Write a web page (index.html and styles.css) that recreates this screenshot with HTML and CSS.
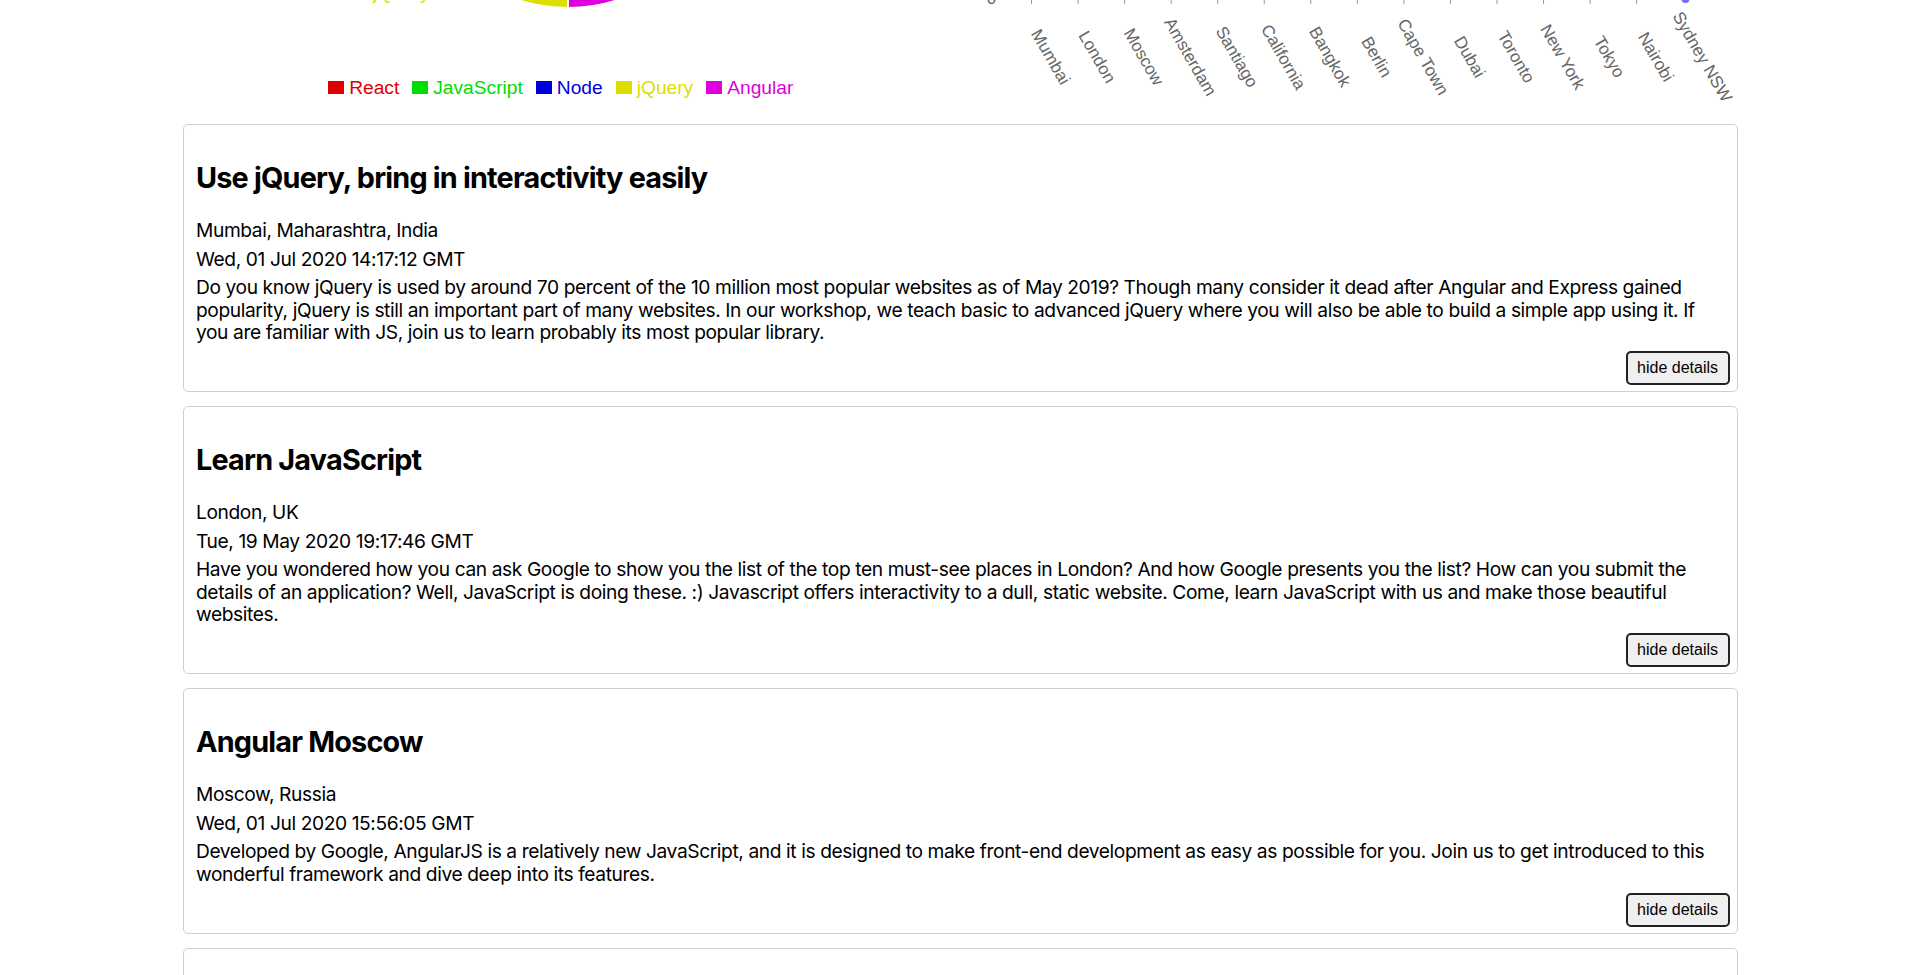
FILE: index.html
```html
<!DOCTYPE html>
<html lang="en">
<head>
<meta charset="utf-8">
<title>Workshops</title>
<link rel="stylesheet" href="styles.css">
</head>
<body>
<div class="page">
  <section class="charts">
    <div class="chart chart-pie">
      <svg class="pie-svg" width="777" height="76" viewBox="0 0 777 76">
        <g stroke="#fff" stroke-width="2">
          <path d="M385 -152 L385 -312 A160 160 0 0 1 535.4 -206.7 Z" fill="#dd0000"/>
          <path d="M385 -152 L535.4 -206.7 A160 160 0 0 1 507.6 -49.2 Z" fill="#00dd00"/>
          <path d="M385 -152 L507.6 -49.2 A160 160 0 0 1 385 8 Z" fill="#dd00dd"/>
          <path d="M385 -152 L385 8 A160 160 0 0 1 227.4 -179.8 Z" fill="#dddd00"/>
          <path d="M385 -152 L227.4 -179.8 A160 160 0 0 1 385 -312 Z" fill="#0000dd"/>
        </g>
        <text x="190" y="-1" class="pie-label" fill="#dddd00">jQuery</text>
      </svg>
      <ul class="legend">
        <li class="legend-item react"><span class="swatch"></span>React</li>
        <li class="legend-item javascript"><span class="swatch"></span>JavaScript</li>
        <li class="legend-item node"><span class="swatch"></span>Node</li>
        <li class="legend-item jquery"><span class="swatch"></span>jQuery</li>
        <li class="legend-item angular"><span class="swatch"></span>Angular</li>
      </ul>
    </div>
    <div class="chart chart-bar">
      <svg class="bar-svg" width="777" height="110" viewBox="0 0 777 110">
        <text x="30.5" y="3.5" class="axis-label" text-anchor="middle">0</text>
        <g stroke="#999" stroke-width="1">
          <line x1="70.5" y1="-6" x2="70.5" y2="4"/>
          <line x1="117.05" y1="-6" x2="117.05" y2="4"/>
          <line x1="163.6" y1="-6" x2="163.6" y2="4"/>
          <line x1="210.15" y1="-6" x2="210.15" y2="4"/>
          <line x1="256.7" y1="-6" x2="256.7" y2="4"/>
          <line x1="303.25" y1="-6" x2="303.25" y2="4"/>
          <line x1="349.8" y1="-6" x2="349.8" y2="4"/>
          <line x1="396.35" y1="-6" x2="396.35" y2="4"/>
          <line x1="442.9" y1="-6" x2="442.9" y2="4"/>
          <line x1="489.45" y1="-6" x2="489.45" y2="4"/>
          <line x1="536" y1="-6" x2="536" y2="4"/>
          <line x1="582.55" y1="-6" x2="582.55" y2="4"/>
          <line x1="629.1" y1="-6" x2="629.1" y2="4"/>
          <line x1="675.65" y1="-6" x2="675.65" y2="4"/>
        </g>
        <circle cx="724.5" cy="-1" r="4" fill="#7070f0"/>
        <g class="axis-label">
          <text transform="translate(89.5 57) rotate(60)" text-anchor="middle" dominant-baseline="central">Mumbai</text>
          <text transform="translate(136.05 57) rotate(60)" text-anchor="middle" dominant-baseline="central">London</text>
          <text transform="translate(182.6 57) rotate(60)" text-anchor="middle" dominant-baseline="central">Moscow</text>
          <text transform="translate(229.15 57) rotate(60)" text-anchor="middle" dominant-baseline="central">Amsterdam</text>
          <text transform="translate(275.7 57) rotate(60)" text-anchor="middle" dominant-baseline="central">Santiago</text>
          <text transform="translate(322.25 57) rotate(60)" text-anchor="middle" dominant-baseline="central">California</text>
          <text transform="translate(368.8 57) rotate(60)" text-anchor="middle" dominant-baseline="central">Bangkok</text>
          <text transform="translate(415.35 57) rotate(60)" text-anchor="middle" dominant-baseline="central">Berlin</text>
          <text transform="translate(461.9 57) rotate(60)" text-anchor="middle" dominant-baseline="central">Cape Town</text>
          <text transform="translate(508.45 57) rotate(60)" text-anchor="middle" dominant-baseline="central">Dubai</text>
          <text transform="translate(555 57) rotate(60)" text-anchor="middle" dominant-baseline="central">Toronto</text>
          <text transform="translate(601.55 57) rotate(60)" text-anchor="middle" dominant-baseline="central">New York</text>
          <text transform="translate(648.1 57) rotate(60)" text-anchor="middle" dominant-baseline="central">Tokyo</text>
          <text transform="translate(694.65 57) rotate(60)" text-anchor="middle" dominant-baseline="central">Nairobi</text>
          <text transform="translate(741.2 57) rotate(60)" text-anchor="middle" dominant-baseline="central">Sydney NSW</text>
        </g>
      </svg>
    </div>
  </section>

  <main class="events">
    <article class="event-card">
      <h2 class="event-title">Use jQuery, bring in interactivity easily</h2>
      <div class="event-location">Mumbai, Maharashtra, India</div>
      <div class="event-date">Wed, 01 Jul 2020 14:17:12 GMT</div>
      <div class="event-desc">Do you know jQuery is used by around 70 percent of the 10 million most popular websites as of May 2019? Though many consider it dead after Angular and Express gained popularity, jQuery is still an important part of many websites. In our workshop, we teach basic to advanced jQuery where you will also be able to build a simple app using it. If you are familiar with JS, join us to learn probably its most popular library.</div>
      <div class="event-actions"><button class="details-btn" type="button">hide details</button></div>
    </article>

    <article class="event-card">
      <h2 class="event-title">Learn JavaScript</h2>
      <div class="event-location">London, UK</div>
      <div class="event-date">Tue, 19 May 2020 19:17:46 GMT</div>
      <div class="event-desc">Have you wondered how you can ask Google to show you the list of the top ten must-see places in London? And how Google presents you the list? How can you submit the details of an application? Well, JavaScript is doing these. :) Javascript offers interactivity to a dull, static website. Come, learn JavaScript with us and make those beautiful websites.</div>
      <div class="event-actions"><button class="details-btn" type="button">hide details</button></div>
    </article>

    <article class="event-card">
      <h2 class="event-title">Angular Moscow</h2>
      <div class="event-location">Moscow, Russia</div>
      <div class="event-date">Wed, 01 Jul 2020 15:56:05 GMT</div>
      <div class="event-desc">Developed by Google, AngularJS is a relatively new JavaScript, and it is designed to make front-end development as easy as possible for you. Join us to get introduced to this wonderful framework and dive deep into its features.</div>
      <div class="event-actions"><button class="details-btn" type="button">hide details</button></div>
    </article>

    <article class="event-card">
      <h2 class="event-title">React Amsterdam</h2>
      <div class="event-location">Amsterdam, Netherlands</div>
      <div class="event-date">Thu, 02 Jul 2020 10:30:00 GMT</div>
      <div class="event-desc">React is a JavaScript library for building user interfaces. Join us to learn components, state and hooks, and build a small app together.</div>
      <div class="event-actions"><button class="details-btn" type="button">hide details</button></div>
    </article>
  </main>
</div>
</body>
</html>
```

FILE: styles.css
```css
* {
  box-sizing: border-box;
}

html, body {
  margin: 0;
  padding: 0;
  background: #fff;
}

body {
  font-family: Inter, "Noto Sans", "Liberation Sans", sans-serif;
  font-size: 19.2px;
  line-height: 22.5px;
  letter-spacing: -0.4px;
  color: #000;
}

.page {
  padding: 0 182px 0 183px;
}

.charts {
  display: grid;
  grid-template-columns: 1fr 1fr;
  height: 110px;
  margin-bottom: 14px;
  letter-spacing: 0;
}

.chart {
  display: flex;
  flex-direction: column;
  min-width: 0;
}

.pie-svg,
.bar-svg {
  display: block;
  overflow: hidden;
}

.pie-label,
.axis-label {
  font-family: "Liberation Sans", Arial, sans-serif;
  font-size: 17px;
}

.pie-label {
  font-size: 19.2px;
}

.axis-label {
  fill: #666;
}

.legend {
  list-style: none;
  margin: 0;
  padding: 0 22px 0 0;
  display: flex;
  justify-content: center;
  gap: 13px;
  font-family: "Liberation Sans", Arial, sans-serif;
  font-size: 19.2px;
  line-height: 24px;
}

.legend-item {
  display: flex;
  align-items: baseline;
}

.swatch {
  display: inline-block;
  width: 16px;
  height: 13px;
  margin-right: 5px;
}

.react { color: #dd0000; }
.react .swatch { background: #dd0000; }
.javascript { color: #00dd00; }
.javascript .swatch { background: #00dd00; }
.node { color: #0000dd; }
.node .swatch { background: #0000dd; }
.jquery { color: #dddd00; }
.jquery .swatch { background: #dddd00; }
.angular { color: #dd00dd; }
.angular .swatch { background: #dd00dd; }

.events {
  display: flex;
  flex-direction: column;
  gap: 14px;
}

.event-card {
  border: 1px solid #cfcfcf;
  border-radius: 5px;
  padding: 11px 7.5px 6px 12px;
}

.event-title {
  font-size: 28.8px;
  line-height: 35px;
  font-weight: 700;
  margin: 24px 0;
  letter-spacing: -0.8px;
}

.event-location,
.event-date {
  margin-bottom: 6px;
}

.event-desc {
  margin-bottom: 7.5px;
}

.event-actions {
  display: flex;
  justify-content: flex-end;
}

.details-btn {
  height: 34px;
  padding: 0 9.5px;
  font-family: "Liberation Sans", Arial, sans-serif;
  font-size: 16px;
  letter-spacing: 0;
  color: #000;
  background: #efefef;
  border: 2px solid #222;
  border-radius: 5px;
}
```
